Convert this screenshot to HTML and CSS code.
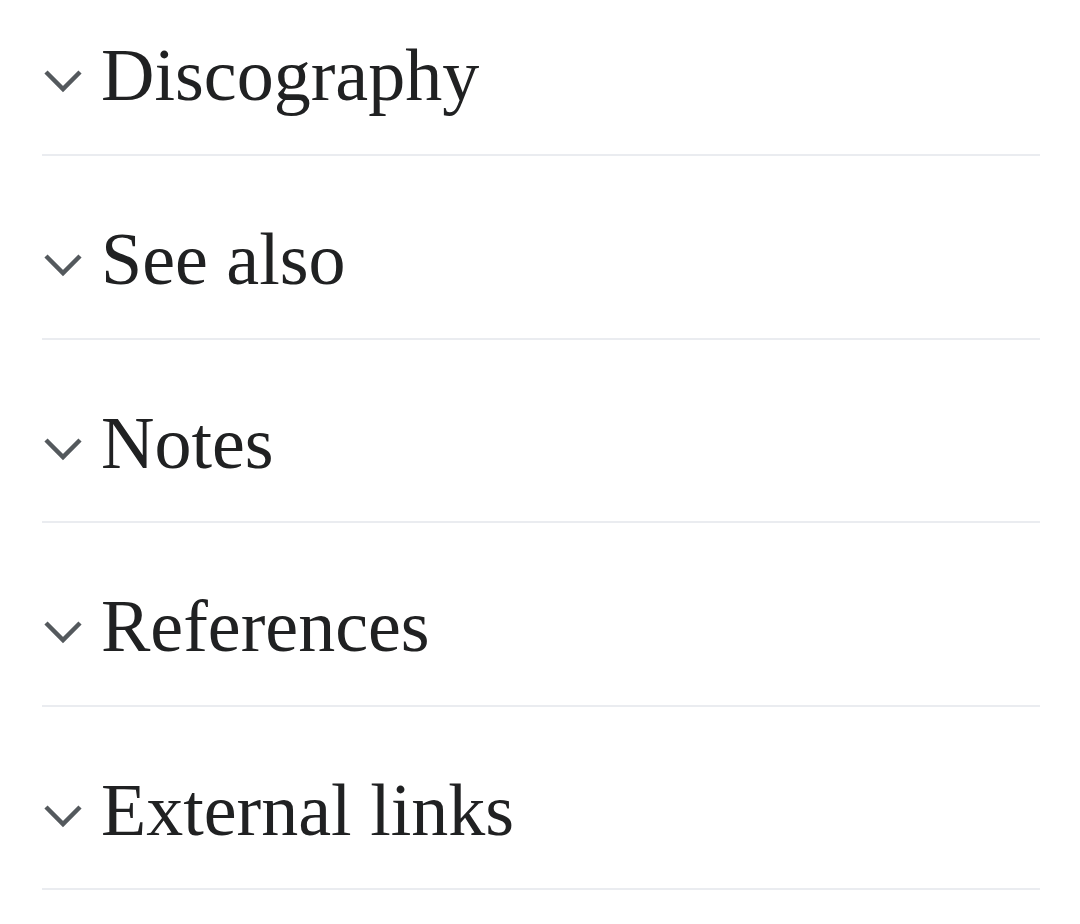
FILE: index.html
```html
<!DOCTYPE html>
<html lang="en">
<head>
    <meta charset="UTF-8">
    <meta name="viewport" content="width=device-width, initial-scale=1.0">
    <title>Sections</title>
    <link rel="stylesheet" href="styles.css">
</head>
<body>
    <div class="sections">
        <div class="section">
            <h2 class="section-heading">
                <svg class="chevron" viewBox="0 0 38 24"><polyline points="2,3 19,20 36,3"/></svg>
                <span>Discography</span>
            </h2>
        </div>
        <div class="section">
            <h2 class="section-heading">
                <svg class="chevron" viewBox="0 0 38 24"><polyline points="2,3 19,20 36,3"/></svg>
                <span>See also</span>
            </h2>
        </div>
        <div class="section">
            <h2 class="section-heading">
                <svg class="chevron" viewBox="0 0 38 24"><polyline points="2,3 19,20 36,3"/></svg>
                <span>Notes</span>
            </h2>
        </div>
        <div class="section">
            <h2 class="section-heading">
                <svg class="chevron" viewBox="0 0 38 24"><polyline points="2,3 19,20 36,3"/></svg>
                <span>References</span>
            </h2>
        </div>
        <div class="section">
            <h2 class="section-heading">
                <svg class="chevron" viewBox="0 0 38 24"><polyline points="2,3 19,20 36,3"/></svg>
                <span>External links</span>
            </h2>
        </div>
    </div>
</body>
</html>
```

FILE: styles.css
```css
body {
    margin: 0;
    padding: 0;
    background-color: #fff;
    font-family: "Liberation Serif", "DejaVu Serif", serif;
    color: #202122;
}

.sections {
    padding: 0 40px 0 42px;
}

.section {
    height: 181.5px;
    border-bottom: 2px solid #eaecf0;
}

.section:first-child {
    height: 154px;
}

.section-heading {
    display: flex;
    align-items: center;
    margin: 0;
    padding-top: 53px;
    font-size: 74px;
    font-weight: normal;
    line-height: 100px;
}

.section:first-child .section-heading {
    padding-top: 25px;
}

.chevron {
    width: 38px;
    height: 24px;
    margin: 12px 19px 0 2px;
    fill: none;
    stroke: #54595d;
    stroke-width: 4.5;
}
```
